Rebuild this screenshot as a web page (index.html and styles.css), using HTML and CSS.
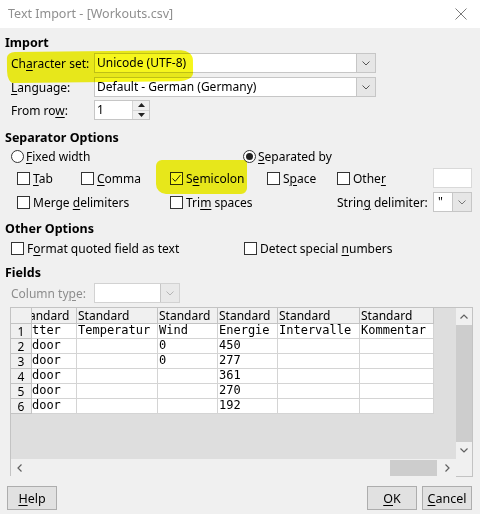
FILE: index.html
```html
<!DOCTYPE html>
<html>
<head>
<meta charset="utf-8">
<link rel="stylesheet" href="styles.css">
</head>
<body>
<div class="dialog">
  <div class="titlebar">
    <span class="title">Text Import - [Workouts.csv]</span>
    <svg class="close" width="12" height="12" viewBox="0 0 12 12"><path d="M0.5 0.5 L11.5 11.5 M11.5 0.5 L0.5 11.5" stroke="#7a7a7a" stroke-width="1" fill="none"/></svg>
  </div>

  <div class="content">
    <div class="heading h-import">Import</div>
    <div class="formrow r1">
      <span class="label">Ch<u>a</u>racter set:</span>
      <div class="combo wide"><span class="val">Unicode (UTF-8)</span><span class="btn"><svg width="8" height="5" viewBox="0 0 8 5"><path d="M0.5 0.5 L4 4 L7.5 0.5" stroke="#555" fill="none"/></svg></span></div>
    </div>
    <div class="formrow r2">
      <span class="label"><u>L</u>anguage:</span>
      <div class="combo wide"><span class="val">Default - German (Germany)</span><span class="btn"><svg width="8" height="5" viewBox="0 0 8 5"><path d="M0.5 0.5 L4 4 L7.5 0.5" stroke="#555" fill="none"/></svg></span></div>
    </div>
    <div class="formrow r3">
      <span class="label">From ro<u>w</u>:</span>
      <div class="spin"><span class="val">1</span><span class="spinbtns"><span class="sb"><svg width="7" height="4" viewBox="0 0 7 4"><path d="M0 4 L3.5 0 L7 4 Z" fill="#222"/></svg></span><span class="sb"><svg width="7" height="4" viewBox="0 0 7 4"><path d="M0 0 L3.5 4 L7 0 Z" fill="#222"/></svg></span></span></div>
    </div>

    <div class="heading h-sep">Separator Options</div>
    <div class="radiorow">
      <span class="opt"><span class="radio"></span><span><u>F</u>ixed width</span></span>
      <span class="opt"><span class="radio on"><span class="dot"></span></span><span><u>S</u>eparated by</span></span>
    </div>
    <div class="sepgrid">
      <span class="opt"><span class="cb"></span><span><u>T</u>ab</span></span>
      <span class="opt"><span class="cb"></span><span><u>C</u>omma</span></span>
      <span class="opt"><span class="cb checked"><svg width="11" height="11" viewBox="0 0 11 11"><path d="M1.5 5.5 L4.2 8.3 L9.5 2" stroke="#222" stroke-width="1" fill="none"/></svg></span><span>S<u>e</u>micolon</span></span>
      <span class="opt"><span class="cb"></span><span>S<u>p</u>ace</span></span>
      <span class="opt"><span class="cb"></span><span>Othe<u>r</u></span></span>
      <span class="textfield"></span>
      <span class="opt span2"><span class="cb"></span><span>Merge <u>d</u>elimiters</span></span>
      <span class="opt span2"><span class="cb"></span><span>Tri<u>m</u> spaces</span></span>
      <span class="strlabel">Strin<u>g</u> delimiter:</span>
      <div class="combo small"><span class="val">"</span><span class="btn"><svg width="8" height="5" viewBox="0 0 8 5"><path d="M0.5 0.5 L4 4 L7.5 0.5" stroke="#777" fill="none"/></svg></span></div>
    </div>

    <div class="heading h-other">Other Options</div>
    <div class="otherrow">
      <span class="opt"><span class="cb"></span><span>F<u>o</u>rmat quoted field as text</span></span>
      <span class="opt"><span class="cb"></span><span>Detect special <u>n</u>umbers</span></span>
    </div>

    <div class="heading h-fields">Fields</div>
    <div class="formrow r4">
      <span class="label disabled">Column ty<u>p</u>e:</span>
      <div class="combo coltype"><span class="val"></span><span class="btn dis"><svg width="8" height="5" viewBox="0 0 8 5"><path d="M0.5 0.5 L4 4 L7.5 0.5" stroke="#b5b5b5" fill="none"/></svg></span></div>
    </div>

    <div class="gridbox">
      <div class="viewport">
        <div class="table">
          <div class="corner"></div>
          <div class="hc first"><span>Standard</span></div>
          <div class="hc">Standard</div>
          <div class="hc">Standard</div>
          <div class="hc">Standard</div>
          <div class="hc">Standard</div>
          <div class="hc">Standard</div>

          <div class="rh">1</div>
          <div class="dc first"><span>Wetter</span></div>
          <div class="dc">Temperatur</div>
          <div class="dc">Wind</div>
          <div class="dc">Energie</div>
          <div class="dc">Intervalle</div>
          <div class="dc">Kommentar</div>

          <div class="rh">2</div>
          <div class="dc first"><span>Indoor</span></div>
          <div class="dc"></div>
          <div class="dc">0</div>
          <div class="dc">450</div>
          <div class="dc"></div>
          <div class="dc"></div>

          <div class="rh">3</div>
          <div class="dc first"><span>Indoor</span></div>
          <div class="dc"></div>
          <div class="dc">0</div>
          <div class="dc">277</div>
          <div class="dc"></div>
          <div class="dc"></div>

          <div class="rh">4</div>
          <div class="dc first"><span>Indoor</span></div>
          <div class="dc"></div>
          <div class="dc"></div>
          <div class="dc">361</div>
          <div class="dc"></div>
          <div class="dc"></div>

          <div class="rh">5</div>
          <div class="dc first"><span>Indoor</span></div>
          <div class="dc"></div>
          <div class="dc"></div>
          <div class="dc">270</div>
          <div class="dc"></div>
          <div class="dc"></div>

          <div class="rh">6</div>
          <div class="dc first"><span>Indoor</span></div>
          <div class="dc"></div>
          <div class="dc"></div>
          <div class="dc">192</div>
          <div class="dc"></div>
          <div class="dc"></div>
        </div>
      </div>
      <div class="vscroll">
        <span class="arrow"><svg width="8" height="5" viewBox="0 0 8 5"><path d="M0.5 4.5 L4 1 L7.5 4.5" stroke="#606060" stroke-width="1.2" fill="none"/></svg></span>
        <span class="vthumb"></span>
        <span class="arrow"><svg width="8" height="5" viewBox="0 0 8 5"><path d="M0.5 0.5 L4 4 L7.5 0.5" stroke="#606060" stroke-width="1.2" fill="none"/></svg></span>
      </div>
      <div class="hscroll">
        <span class="harrow left"><svg width="5" height="8" viewBox="0 0 5 8"><path d="M4.5 0.5 L1 4 L4.5 7.5" stroke="#606060" stroke-width="1.2" fill="none"/></svg></span>
        <span class="htrack"></span>
        <span class="hthumb"></span>
        <span class="harrow right"><svg width="5" height="8" viewBox="0 0 5 8"><path d="M0.5 0.5 L4 4 L0.5 7.5" stroke="#606060" stroke-width="1.2" fill="none"/></svg></span>
      </div>
      <div class="scorner"></div>
    </div>

    <div class="buttons">
      <button class="pb"><u>H</u>elp</button>
      <span class="spacer"></span>
      <button class="pb"><u>O</u>K</button>
      <button class="pb"><u>C</u>ancel</button>
    </div>
  </div>

  <div class="hl hl1"></div>
  <div class="hl hl2"></div>
</div>
</body>
</html>
```

FILE: styles.css
```css
* { box-sizing: border-box; }
html, body { margin: 0; padding: 0; }
body {
  width: 480px;
  height: 514px;
  overflow: hidden;
  background: #f0f0f0;
  font-family: "Noto Sans", "Open Sans", sans-serif;
  font-size: 12px;
  color: #000;
}
u { text-decoration: underline; text-underline-offset: 2px; text-decoration-thickness: 1px; }

.dialog { position: relative; width: 480px; height: 514px; }

.titlebar {
  height: 28px;
  background: #fff;
  display: flex;
  align-items: center;
  justify-content: space-between;
  padding: 0 13px 1px 8px;
}
.title { color: #8f8f8f; font-size: 12.5px; }

.content { padding: 4px 0 0 0; }

.heading {
  height: 20px;
  display: flex;
  align-items: center;
  padding-left: 5px;
  font-weight: bold;
  font-size: 12.5px;
}
.h-sep { margin-top: 7px; }
.h-other { margin-top: 6px; }
.h-fields { margin-top: 4px; }

.formrow {
  display: flex;
  align-items: center;
  height: 20px;
  padding-left: 11px;
}
.r1 { margin-top: 1px; }
.r2 { margin-top: 4px; }
.r3 { margin-top: 3px; }
.r4 { margin-top: 1px; }
.label { width: 83px; white-space: nowrap; }
.label.disabled { color: #8d8d8d; }

.combo {
  display: flex;
  height: 20px;
  background: #fff;
  border: 1px solid #c6c6c6;
}
.combo .val { flex: 1; padding-left: 2px; line-height: 18px; white-space: nowrap; overflow: hidden; }
.combo .btn {
  width: 19px;
  background: #e6e6e6;
  border-left: 1px solid #c6c6c6;
  display: flex;
  align-items: center;
  justify-content: center;
}
.combo .btn.dis { background: #e9e9e9; }
.combo.wide { width: 282px; }
.combo.coltype { width: 86px; border-color: #d2d2d2; }
.combo.small { width: 39px; }
.combo.small .val { padding-left: 4px; }

.spin {
  display: flex;
  width: 56px;
  height: 20px;
  background: #fff;
  border: 1px solid #c6c6c6;
}
.spin .val { flex: 1; padding-left: 2px; line-height: 18px; }
.spinbtns {
  width: 17px;
  display: flex;
  flex-direction: column;
  background: #f0f0f0;
  border-left: 1px solid #d6d6d6;
}
.sb { flex: 1; display: flex; align-items: center; justify-content: center; }
.sb + .sb { border-top: 1px solid #d6d6d6; }

.opt { display: flex; align-items: center; white-space: nowrap; }
.cb {
  width: 13px;
  height: 13px;
  border: 1px solid #333;
  background: #fff;
  margin-right: 3px;
  flex: none;
  display: flex;
  align-items: center;
  justify-content: center;
}
.radio {
  width: 13px;
  height: 13px;
  border: 1px solid #333;
  border-radius: 50%;
  background: #fff;
  margin-right: 2px;
  flex: none;
  display: flex;
  align-items: center;
  justify-content: center;
}
.radio .dot { width: 7px; height: 7px; border-radius: 50%; background: #222; }

.radiorow {
  height: 18px;
  display: grid;
  grid-template-columns: 232px auto;
  align-items: center;
  padding-left: 11px;
}

.sepgrid {
  margin-top: 3px;
  display: grid;
  grid-template-columns: 64px 89px 97px 70px 96px 39px;
  grid-template-rows: 20px 20px;
  row-gap: 4px;
  align-items: center;
  padding-left: 17px;
}
.span2 { grid-column: span 2; }
.textfield {
  display: block;
  width: 39px;
  height: 20px;
  background: #fff;
  border: 1px solid #d9d9d9;
}
.strlabel { white-space: nowrap; }

.otherrow {
  height: 20px;
  display: grid;
  grid-template-columns: 233px auto;
  align-items: center;
  padding-left: 11px;
}

.gridbox {
  margin: 4px 0 0 10px;
  width: 463px;
  height: 169px;
  display: grid;
  grid-template-columns: 445px 17px;
  grid-template-rows: 151px 18px;
  border-left: 1px solid #c3c3c3;
  border-top: 1px solid #c3c3c3;
}
.viewport { background: #dedede; overflow: hidden; }
.table {
  display: grid;
  grid-template-columns: 21px 45px 81px 60px 60px 82px 74px;
  grid-template-rows: 16px repeat(6, 15px);
  font-size: 12px;
}
.corner, .rh, .hc {
  background: #f0f0f0;
  border-right: 1px solid #c3c3c3;
  border-bottom: 1px solid #c3c3c3;
}
.hc { padding-left: 1px; line-height: 15px; white-space: nowrap; overflow: hidden; }
.rh {
  text-align: center;
  font-size: 12px;
  line-height: 14px;
  padding-top: 1px;
}
.dc {
  background: #fff;
  border-right: 1px solid #d4d4d4;
  border-bottom: 1px solid #d4d4d4;
  font-family: "DejaVu Sans Mono", "Liberation Mono", monospace;
  font-size: 12px;
  line-height: 13px;
  padding-left: 1px;
  white-space: nowrap;
  overflow: hidden;
}
.first { padding-left: 0; }
.hc.first span { margin-left: -14px; }
.dc.first span { margin-left: -14.5px; }
.first span { display: inline-block; }

.vscroll {
  background: #f0f0f0;
  border-right: 1px solid #c3c3c3;
  display: flex;
  flex-direction: column;
}
.vscroll .arrow { height: 17px; display: flex; align-items: center; justify-content: center; flex: none; }
.vthumb { flex: 1; background: #cdcdcd; }

.hscroll {
  background: #f0f0f0;
  display: flex;
  align-items: stretch;
}
.harrow { width: 17px; display: flex; align-items: center; justify-content: center; flex: none; }
.htrack { flex: 1; }
.hthumb { width: 47px; background: #cdcdcd; margin: 1px 2px 1px 0; }
.scorner {
  border-right: 1px solid #c3c3c3;
  border-bottom: 1px solid #c3c3c3;
  background: #f0f0f0;
}

.buttons {
  display: flex;
  gap: 5px;
  margin-top: 10px;
  padding: 0 8px 0 7px;
}
.spacer { flex: 1; }
.pb {
  width: 50px;
  height: 24px;
  background: #e1e1e1;
  border: 1px solid #adadad;
  font-family: inherit;
  font-size: 12.5px;
  color: #000;
  padding: 0;
}

.hl {
  position: absolute;
  background: #f6f61c;
  mix-blend-mode: multiply;
  pointer-events: none;
}
.hl1 {
  left: 7px;
  top: 51px;
  width: 186px;
  height: 31px;
  border-radius: 8px 12px 14px 6px / 6px 10px 8px 12px;
  transform: rotate(-0.6deg);
}
.hl2 {
  left: 156px;
  top: 160px;
  width: 91px;
  height: 34px;
  border-radius: 6px 4px 6px 10px;
}
```
